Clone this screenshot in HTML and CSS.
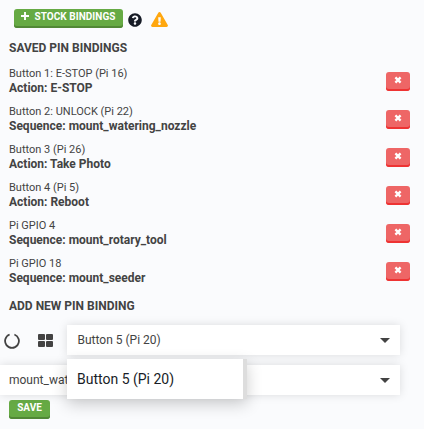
FILE: index.html
```html
<!DOCTYPE html>
<html lang="en">
<head>
<meta charset="utf-8">
<title>Pin Bindings</title>
<link rel="stylesheet" href="styles.css">
</head>
<body>
<svg class="defs" width="0" height="0">
  <symbol id="times" viewBox="0 0 8 8"><path d="M1.4 1.4 6.6 6.6M6.6 1.4 1.4 6.6" fill="none" stroke="#fff" stroke-width="2.3"/></symbol>
</svg>
<main class="panel">
  <div class="toolbar">
    <button class="btn green stock"><svg class="plus" viewBox="0 0 8 8"><path d="M4 0v8M0 4h8" fill="none" stroke="#fff" stroke-width="1.9"/></svg><span>STOCK BINDINGS</span></button>
    <svg class="help" viewBox="0 0 512 512"><path fill="#161b26" d="M504 256c0 136.997-111.043 248-248 248S8 392.997 8 256C8 119.083 119.043 8 256 8s248 111.083 248 248zM262.655 90c-54.497 0-89.255 22.957-116.549 63.758-3.536 5.286-2.353 12.415 2.715 16.258l34.699 26.31c5.205 3.947 12.621 3.008 16.665-2.122 17.864-22.658 30.113-35.797 57.303-35.797 20.429 0 45.698 13.148 45.698 32.958 0 14.976-12.363 22.667-32.534 33.976C247.128 238.528 216 254.941 216 296v4c0 6.627 5.373 12 12 12h56c6.627 0 12-5.373 12-12v-1.333c0-28.462 83.186-29.647 83.186-106.667 0-58.002-60.165-102-116.531-102zM256 338c-25.365 0-46 20.635-46 46 0 25.364 20.635 46 46 46s46-20.636 46-46c0-25.365-20.635-46-46-46z"/></svg>
    <svg class="warn" viewBox="0 0 576 512"><path fill="#ffa70f" d="M569.517 440.013C587.975 472.007 564.806 512 527.94 512H48.054c-36.937 0-59.999-40.055-41.577-71.987L246.423 23.985c18.467-32.009 64.72-31.951 83.154 0l239.94 416.028zM288 354c-25.405 0-46 20.595-46 46s20.595 46 46 46 46-20.595 46-46-20.595-46-46-46zm-43.673-165.346l7.418 136c.347 6.364 5.609 11.346 11.982 11.346h48.546c6.373 0 11.635-4.982 11.982-11.346l7.418-136c.375-6.874-5.098-12.654-11.982-12.654h-63.383c-6.884 0-12.356 5.78-11.981 12.654z"/></svg>
  </div>
  <h2>SAVED PIN BINDINGS</h2>
  <ul class="bindings">
    <li><div><p>Button 1: E-STOP (Pi 16)</p><b>Action: E-STOP</b></div><button class="btn red"><svg><use href="#times"/></svg></button></li>
    <li><div><p>Button 2: UNLOCK (Pi 22)</p><b>Sequence: mount_watering_nozzle</b></div><button class="btn red"><svg><use href="#times"/></svg></button></li>
    <li><div><p>Button 3 (Pi 26)</p><b>Action: Take Photo</b></div><button class="btn red"><svg><use href="#times"/></svg></button></li>
    <li><div><p>Button 4 (Pi 5)</p><b>Action: Reboot</b></div><button class="btn red"><svg><use href="#times"/></svg></button></li>
    <li><div><p>Pi GPIO 4</p><b>Sequence: mount_rotary_tool</b></div><button class="btn red"><svg><use href="#times"/></svg></button></li>
    <li><div><p>Pi GPIO 18</p><b>Sequence: mount_seeder</b></div><button class="btn red"><svg><use href="#times"/></svg></button></li>
  </ul>
  <h2 class="add">ADD NEW PIN BINDING</h2>
  <div class="pin-row">
    <svg class="ring" viewBox="0 0 16 16"><path d="M10.4 1.5A6.9 6.9 0 1 1 5.6 1.5" fill="none" stroke="#434343" stroke-width="1.8"/></svg>
    <svg class="grid" viewBox="0 0 16 13" fill="#434343"><rect width="7" height="6" rx="1"/><rect x="8" width="7" height="6" rx="1"/><rect y="7" width="7" height="6" rx="1"/><rect x="8" y="7" width="7" height="6" rx="1"/></svg>
    <div class="select pin"><span>Button 5 (Pi 20)</span><i class="caret"></i>
      <div class="menu">Button 5 (Pi 20)</div>
    </div>
  </div>
  <div class="select action"><span>mount_wat</span><i class="caret"></i></div>
  <button class="btn green save">SAVE</button>
</main>
</body>
</html>
```
FILE: styles.css
```css
* { box-sizing: border-box; }
body { margin: 0; background: #fafbfd; color: #434343; font-family: Roboto, "Liberation Sans", sans-serif; }
.defs { position: absolute; }
.panel { width: 424px; height: 429px; overflow: hidden; padding-top: 9px; }
.toolbar { display: flex; align-items: flex-start; height: 29px; padding-left: 14px; }
.btn { display: flex; justify-content: center; border: 0; border-radius: 3px; padding: 0; color: #fff; font: bold 10px/15px Roboto, "Liberation Sans", sans-serif; }
.green { background: #66aa44; box-shadow: inset 0 -2px #518836; }
.stock { width: 109px; height: 19px; letter-spacing: 0.05px; }
.plus { width: 8px; height: 8px; margin: 3px 5px 0 0; }
.help { width: 14px; height: 14px; margin: 4px 0 0 5px; }
.warn { width: 17px; height: 15px; margin: 3px 0 0 9px; }
h2 { margin: 0 0 0 9px; font-size: 12px; line-height: 20px; font-weight: 700; }
.bindings { list-style: none; margin: 9px 14px 0 9px; padding: 0; }
.bindings li { display: flex; justify-content: space-between; height: 38px; }
.bindings p { margin: 0; font-size: 11px; line-height: 14px; }
.bindings b { display: block; font-size: 12px; line-height: 15px; }
.red { width: 24px; height: 19px; margin-top: 5px; background: #ee6666; box-shadow: inset 0 -2px #ee3333; }
.red svg { width: 8px; height: 8px; margin-top: 4px; }
.add { margin-top: 1px; }
.pin-row { display: flex; align-items: center; height: 30px; margin-top: 9px; }
.ring { width: 16px; height: 16px; margin: 2px 0 0 4px; }
.grid { width: 16px; height: 13px; margin: 1px 0 0 18px; }
.select { position: relative; display: flex; align-items: center; justify-content: space-between; height: 30px; padding: 0 10px 0 10.5px; background: #fff; box-shadow: 0 0 10px rgba(0, 0, 0, 0.13); font-size: 12px; }
.pin { width: 333px; margin-left: 13px; z-index: 1; }
.caret { border: 5px solid transparent; border-top-color: #434343; border-bottom: 0; }
.menu { position: absolute; left: 0; top: 34px; width: 180px; height: 40px; padding-left: 10px; border-right: 4px solid #ddd; background: #fff; box-shadow: 0 5px 16px rgba(0, 0, 0, 0.2); color: #191d27; font-size: 14px; line-height: 40px; }
.action { width: 400px; margin-top: 10px; padding-left: 9px; }
.action span { width: 58px; overflow: hidden; white-space: nowrap; }
.save { width: 41px; height: 19px; margin: 5px 0 0 9px; }
```
